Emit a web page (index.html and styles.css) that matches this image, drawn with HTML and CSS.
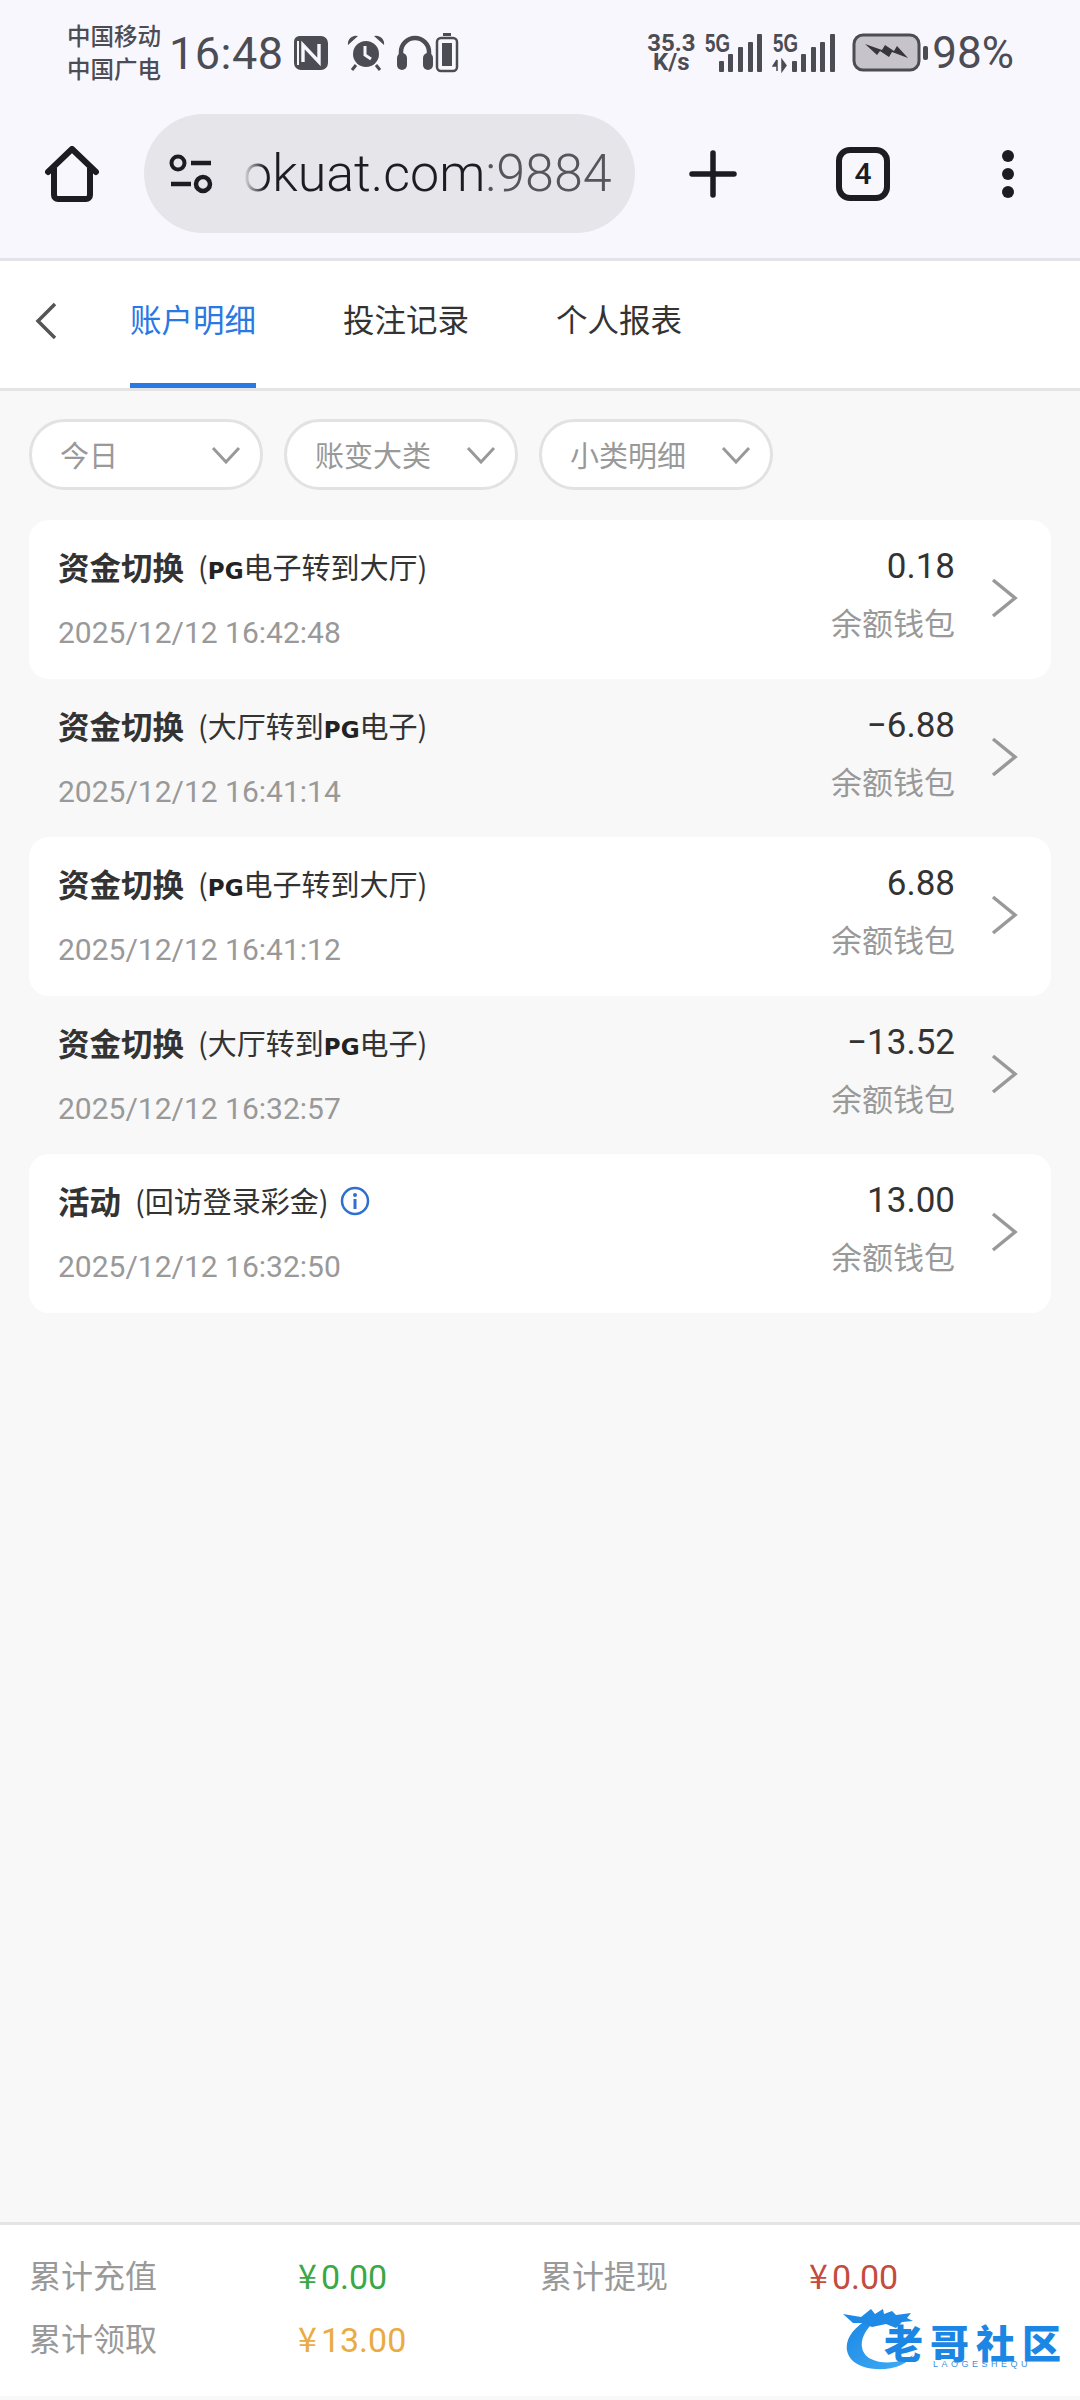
FILE: index.html
```html
<!DOCTYPE html>
<html lang="zh-CN">

<head>
    <meta charset="utf-8">
    <title>账户明细</title>
    <link rel="stylesheet" href="styles.css">
</head>

<body>
    <div class="status-bar">
        <div class="carrier">中国移动<br>中国广电</div>
        <div class="clock">16:48</div>
        <svg class="st-icon" width="36" height="36" viewBox="0 0 36 36">
            <path d="M6 1h22a7 7 0 0 1 7 7v20a7 7 0 0 1-7 7H8a7 7 0 0 1-7-7V7a6 6 0 0 1 5-6z" fill="#4c4c54"/>
            <path d="M10 27V10l16 17V9" fill="none" stroke="#f9f7fe" stroke-width="3.4"/>
            <path d="M5 6v24" stroke="#f9f7fe" stroke-width="2"/>
        </svg>
        <svg class="st-icon alarm" width="38" height="38" viewBox="0 0 38 38">
            <circle cx="19" cy="20" r="13" fill="#4c4c54"/>
            <path d="M1 11a8 8 0 0 1 10-9zM37 11a8 8 0 0 0-10-9z" fill="#4c4c54"/>
            <path d="M9 31l-4 5M29 31l4 5" stroke="#4c4c54" stroke-width="3"/>
            <path d="M18 12v9l6 4" fill="none" stroke="#f9f7fe" stroke-width="3"/>
        </svg>
        <svg class="st-icon phones" width="38" height="36" viewBox="0 0 38 36">
            <path d="M5 22v-5a14 14 0 0 1 28 0v5" fill="none" stroke="#4c4c54" stroke-width="4.500"/>
            <rect x="1" y="18" width="10" height="17" rx="5" fill="#4c4c54"/>
            <rect x="27" y="18" width="10" height="17" rx="5" fill="#4c4c54"/>
        </svg>
        <svg class="st-icon small-batt" width="24" height="40" viewBox="0 0 24 40">
            <rect x="8" y="0" width="8" height="3" fill="#4c4c54"/>
            <rect x="2" y="5" width="20" height="33" rx="4" fill="none" stroke="#4c4c54" stroke-width="2.500"/>
            <rect x="7" y="10" width="10" height="23" fill="#4c4c54"/>
        </svg>

        <div class="status-right">
            <div class="speed">35.3<br>K/s</div>
            <svg class="signal first" width="58" height="48" viewBox="0 -8 58 48">
                <text x="0" y="19" class="net" textLength="25" lengthAdjust="spacingAndGlyphs">5G</text>
                <rect x="14" y="28" width="5" height="11" rx="1" fill="#4c4c54"/>
                <rect x="23" y="21" width="5" height="18" rx="1" fill="#4c4c54"/>
                <rect x="33" y="14" width="5" height="25" rx="1" fill="#4c4c54"/>
                <rect x="43" y="9" width="5" height="30" rx="1" fill="#4c4c54"/>
                <rect x="52" y="1" width="5" height="38" rx="1" fill="#4c4c54"/>
            </svg>
            <svg class="signal" width="64" height="48" viewBox="0 -8 64 48">
                <text x="1" y="19" class="net" textLength="25" lengthAdjust="spacingAndGlyphs">5G</text>
                <path d="M5 27v11M5 27l-4 6h4M10 27v11l4-5.500z" fill="#4c4c54" stroke="#4c4c54" stroke-width="1.500"/>
                <rect x="20" y="28" width="5" height="11" rx="1" fill="#4c4c54"/>
                <rect x="29" y="21" width="5" height="18" rx="1" fill="#4c4c54"/>
                <rect x="39" y="14" width="5" height="25" rx="1" fill="#4c4c54"/>
                <rect x="48" y="9" width="5" height="30" rx="1" fill="#4c4c54"/>
                <rect x="58" y="1" width="5" height="38" rx="1" fill="#4c4c54"/>
            </svg>
            <svg class="battery" width="76" height="40" viewBox="0 0 76 40">
                <rect x="2" y="2" width="65" height="35" rx="9" fill="#c6c4ca" stroke="#4c4c54" stroke-width="3"/>
                <rect x="71" y="13" width="5" height="14" rx="2" fill="#4c4c54"/>
                <path d="M13 11l17 6 3-5 9 6 3-5 11 12-16-6-3 5-9-6-3 4z" fill="#36363c"/>
            </svg>
            <div class="percent">98%</div>
        </div>
    </div>

    <div class="toolbar">
        <svg class="tb-home" width="54" height="56" viewBox="0 0 54 56">
            <path d="M9 22v27a4 4 0 0 0 4 4h28a4 4 0 0 0 4-4V22" fill="none" stroke="#1c1c22" stroke-width="6"/>
            <path d="M3 26L27 3l24 23" fill="none" stroke="#1c1c22" stroke-width="6" stroke-linecap="round" stroke-linejoin="round"/>
        </svg>
        <div class="url-pill">
            <svg width="44" height="40" viewBox="0 0 44 40">
                <circle cx="9" cy="9" r="6.500" fill="none" stroke="#1c1c22" stroke-width="4"/>
                <path d="M22 9h20M2 30h20" stroke="#1c1c22" stroke-width="4.500"/>
                <circle cx="34" cy="30" r="7" fill="none" stroke="#1c1c22" stroke-width="4.500"/>
            </svg>
            <div class="url-text">okuat.com<span class="port">:9884</span></div>
        </div>
        <svg class="tb-plus" width="48" height="48" viewBox="0 0 48 48">
            <path d="M3 24h42M24 3v42" stroke="#1c1c22" stroke-width="5.500" stroke-linecap="round"/>
        </svg>
        <div class="tab-count">4</div>
        <svg class="tb-more" width="16" height="50" viewBox="0 0 16 50">
            <circle cx="8" cy="7" r="6" fill="#1c1c22"/>
            <circle cx="8" cy="25" r="6" fill="#1c1c22"/>
            <circle cx="8" cy="43" r="6" fill="#1c1c22"/>
        </svg>
    </div>

    <div class="tabs">
        <svg class="back" width="24" height="38" viewBox="0 0 24 38">
            <path d="M21 2L4 19l17 17" fill="none" stroke="#555" stroke-width="3.500"/>
        </svg>
        <div class="tab active">账户明细</div>
        <div class="tab">投注记录</div>
        <div class="tab">个人报表</div>
    </div>

    <div class="content">
        <div class="filters">
            <div class="filter"><span>今日</span><svg width="30" height="18" viewBox="0 0 30 18"><path d="M2 2l13 14L28 2" fill="none" stroke="#999" stroke-width="3"/></svg></div>
            <div class="filter"><span>账变大类</span><svg width="30" height="18" viewBox="0 0 30 18"><path d="M2 2l13 14L28 2" fill="none" stroke="#999" stroke-width="3"/></svg></div>
            <div class="filter"><span>小类明细</span><svg width="30" height="18" viewBox="0 0 30 18"><path d="M2 2l13 14L28 2" fill="none" stroke="#999" stroke-width="3"/></svg></div>
        </div>

        <div class="list">
            <div class="row card">
                <div class="row-left">
                    <div class="title"><b>资金切换</b><span class="sub">(<i class="pg">PG</i>电子转到大厅)</span></div>
                    <div class="date">2025/12/12 16:42:48</div>
                </div>
                <div class="row-right">
                    <div class="amount">0.18</div>
                    <div class="wallet">余额钱包</div>
                </div>
                <svg class="arrow" width="28" height="42" viewBox="0 0 28 42"><path d="M3 3l22 18L3 39" fill="none" stroke="#999" stroke-width="3.500"/></svg>
            </div>
            <div class="row">
                <div class="row-left">
                    <div class="title"><b>资金切换</b><span class="sub">(大厅转到<i class="pg">PG</i>电子)</span></div>
                    <div class="date">2025/12/12 16:41:14</div>
                </div>
                <div class="row-right">
                    <div class="amount">−6.88</div>
                    <div class="wallet">余额钱包</div>
                </div>
                <svg class="arrow" width="28" height="42" viewBox="0 0 28 42"><path d="M3 3l22 18L3 39" fill="none" stroke="#999" stroke-width="3.500"/></svg>
            </div>
            <div class="row card">
                <div class="row-left">
                    <div class="title"><b>资金切换</b><span class="sub">(<i class="pg">PG</i>电子转到大厅)</span></div>
                    <div class="date">2025/12/12 16:41:12</div>
                </div>
                <div class="row-right">
                    <div class="amount">6.88</div>
                    <div class="wallet">余额钱包</div>
                </div>
                <svg class="arrow" width="28" height="42" viewBox="0 0 28 42"><path d="M3 3l22 18L3 39" fill="none" stroke="#999" stroke-width="3.500"/></svg>
            </div>
            <div class="row">
                <div class="row-left">
                    <div class="title"><b>资金切换</b><span class="sub">(大厅转到<i class="pg">PG</i>电子)</span></div>
                    <div class="date">2025/12/12 16:32:57</div>
                </div>
                <div class="row-right">
                    <div class="amount">−13.52</div>
                    <div class="wallet">余额钱包</div>
                </div>
                <svg class="arrow" width="28" height="42" viewBox="0 0 28 42"><path d="M3 3l22 18L3 39" fill="none" stroke="#999" stroke-width="3.500"/></svg>
            </div>
            <div class="row card">
                <div class="row-left">
                    <div class="title"><b>活动</b><span class="sub">(回访登录彩金)</span>
                        <svg class="info" width="30" height="30" viewBox="0 0 30 30">
                            <circle cx="15" cy="15" r="13" fill="none" stroke="#2f6fd0" stroke-width="2.500"/>
                            <circle cx="15" cy="9" r="2" fill="#2f6fd0"/>
                            <path d="M15 13v10" stroke="#2f6fd0" stroke-width="3"/>
                        </svg>
                    </div>
                    <div class="date">2025/12/12 16:32:50</div>
                </div>
                <div class="row-right">
                    <div class="amount">13.00</div>
                    <div class="wallet">余额钱包</div>
                </div>
                <svg class="arrow" width="28" height="42" viewBox="0 0 28 42"><path d="M3 3l22 18L3 39" fill="none" stroke="#999" stroke-width="3.500"/></svg>
            </div>
        </div>
    </div>

    <div class="summary">
        <div class="sum-label">累计充值</div>
        <div class="sum-value green">¥<span>0.00</span></div>
        <div class="sum-label">累计提现</div>
        <div class="sum-value red">¥<span>0.00</span></div>
        <div class="sum-label">累计领取</div>
        <div class="sum-value orange">¥<span>13.00</span></div>
    </div>
    <div class="bottom-strip"></div>

    <!-- watermark sits over the footer -->
    <div class="watermark">
        <svg width="222" height="66" viewBox="0 0 222 66">
            <defs>
                <linearGradient id="sw" x1="0" y1="0" x2="1" y2="1">
                    <stop offset="0" stop-color="#1c86e4"/>
                    <stop offset="1" stop-color="#40aef5"/>
                </linearGradient>
            </defs>
            <path d="M26 12C6 22-2 40 8 52c8 10 32 14 50 6 6-3 10-6 12-10-12 8-30 10-42 4C16 46 14 30 32 14z" fill="url(#sw)"/>
            <path d="M0 7l18 3 10-8 4 5 8-5 1 5 8-3 4 4 15-2-4 5 6 3-11 1-6 6-10-4-14 3-10-4-9 0z" fill="#1e8ae6"/>
        </svg>
        <div class="wm-name">老哥社区</div>
        <div class="wm-sub">LAOGESHEQU</div>
    </div>
</body>

</html>
```

FILE: styles.css
```css
* {
    box-sizing: border-box;
}

html,
body {
    margin: 0;
    height: 2400px;
}

body {
    position: relative;
    display: flex;
    flex-direction: column;
    background-color: #f8f8f8;
    font-family: Roboto, "Noto Sans CJK SC", sans-serif;
    overflow: hidden;
}

/* status bar */
.status-bar {
    display: flex;
    align-items: center;
    height: 104px;
    padding: 2px 0 0 67px;
    background-color: #f9f7fe;
    color: #4c4c54;
}

.carrier {
    width: 100px;
    margin-top: -3px;
    font-family: "Noto Sans CJK SC", sans-serif;
    font-size: 23.500px;
    font-weight: 500;
    line-height: 33px;
}

.clock {
    width: 124px;
    margin-left: 2px;
    font-size: 45px;
    letter-spacing: 0.500px;
}

.st-icon {
    margin-right: 14px;
}

.alarm {
    margin-left: 4px;
    margin-right: 11px;
}

.phones {
    margin-right: 0;
}

.small-batt {
    margin-left: 1px;
}

.status-right {
    display: flex;
    align-items: center;
    margin-left: auto;
    padding-right: 66px;
}

.speed {
    width: 52px;
    font-size: 24px;
    font-weight: 700;
    line-height: 19px;
    text-align: center;
}

.signal.first {
    margin-left: 8px;
}

.signal {
    margin-top: -8px;
    margin-left: 9px;
}

.net {
    font-family: "Liberation Sans", sans-serif;
    font-size: 25px;
    font-weight: 700;
    fill: #4c4c54;
}

.battery {
    margin-left: 16px;
}

.percent {
    margin-left: 4px;
    font-size: 44px;
}

/* browser toolbar */
.toolbar {
    display: flex;
    align-items: center;
    height: 157px;
    padding: 10px 0 25px 45px;
    background-color: #f9f7fe;
    border-bottom: 3px solid #e3e3e8;
}

.url-pill {
    display: flex;
    align-items: center;
    width: 491px;
    height: 119px;
    margin-left: 45px;
    padding-left: 25px;
    background-color: #e5e5ea;
    border-radius: 60px;
    overflow: hidden;
}

.url-text {
    margin-left: 30px;
    font-size: 52px;
    font-weight: 300;
    color: #1c1c22;
    white-space: nowrap;
    -webkit-mask-image: linear-gradient(to right, transparent 0, #000 22px);
    mask-image: linear-gradient(to right, transparent 0, #000 22px);
}

.port {
    color: #55555c;
}

.tb-plus {
    margin-left: 54px;
}

.tab-count {
    width: 54px;
    height: 54px;
    margin-left: 99px;
    border: 6px solid #1c1c22;
    border-radius: 14px;
    font-size: 30px;
    font-weight: 500;
    line-height: 42px;
    text-align: center;
    color: #1c1c22;
}

.tb-more {
    margin-left: 110px;
}

/* page tabs */
.tabs {
    display: flex;
    align-items: flex-start;
    height: 130px;
    padding-left: 34px;
    background-color: #fff;
    border-bottom: 3px solid #e4e4e4;
}

.back {
    margin-top: 41px;
}

.tab {
    height: 127px;
    margin-left: 87px;
    padding-top: 35px;
    font-family: "Noto Sans CJK SC", sans-serif;
    font-size: 31.500px;
    line-height: 45px;
    color: #333;
}

.back + .tab {
    margin-left: 72px;
}

.tab.active {
    color: #2a78e4;
    border-bottom: 5px solid #2a78e4;
}

/* filters and list */
.content {
    flex: 1;
    font-family: "Noto Sans CJK SC", sans-serif;
}

.filters {
    display: flex;
    gap: 21px;
    padding: 28px 0 0 29px;
}

.filter {
    display: flex;
    align-items: center;
    justify-content: space-between;
    width: 234px;
    height: 71px;
    padding: 0 19px 0 28px;
    background-color: #fff;
    border: 3px solid #e2e2e2;
    border-radius: 36px;
    font-size: 29px;
    color: #999;
}

.filter span {
    margin-top: -2px;
}

.list {
    margin: 30px 29px 0;
}

.row {
    display: flex;
    align-items: flex-start;
    height: 158.500px;
    padding: 26px 0 0 29px;
    border-radius: 20px;
}

.card {
    background-color: #fff;
}

.row-left {
    flex: 1;
}

.title {
    display: flex;
    align-items: center;
    height: 40px;
    color: #333;
}

.title b {
    font-size: 31.500px;
    font-weight: 700;
}

.sub {
    margin-left: 14px;
    font-size: 29px;
}

.pg {
    font-family: "DejaVu Sans", sans-serif;
    font-size: 23px;
    font-weight: 700;
    font-style: normal;
    color: #222;
}

.info {
    margin-left: 11px;
    margin-top: 2px;
}

.date {
    margin-top: 27px;
    font-family: Roboto, sans-serif;
    font-size: 30px;
    line-height: 40px;
    color: #999;
}

.row-right {
    margin-top: 1px;
    text-align: right;
}

.amount {
    font-family: Roboto, sans-serif;
    font-size: 35px;
    line-height: 40px;
    color: #333;
}

.wallet {
    margin-top: 15px;
    font-size: 31px;
    line-height: 40px;
    color: #999;
}

.arrow {
    margin: 31px 33px 0 35px;
}

/* footer totals */
.summary {
    display: grid;
    grid-template-columns: 269px 242px 269px 1fr;
    grid-template-rows: 63px 63px;
    align-content: start;
    height: 174px;
    padding: 18px 0 0 29px;
    background-color: #fff;
    border-top: 3px solid #e4e4e4;
    font-family: "Noto Sans CJK SC", sans-serif;
    font-size: 32px;
    line-height: 63px;
    color: #999;
}

.sum-value {
    font-size: 34px;
}

.sum-value span {
    margin-left: 4px;
    font-family: Roboto, sans-serif;
    font-size: 34px;
}

.green {
    color: #39a845;
}

.red {
    color: #c44c3e;
}

.orange {
    color: #e9ab43;
}

.bottom-strip {
    height: 4px;
    background-color: #f8f8f8;
}

.watermark {
    position: absolute;
    left: 843px;
    top: 2307px;
    width: 222px;
    height: 66px;
}

.wm-name {
    position: absolute;
    left: 41px;
    top: 19px;
    width: 184px;
    font-family: "Noto Sans CJK SC", sans-serif;
    font-size: 39px;
    font-weight: 900;
    line-height: 31px;
    letter-spacing: 7px;
    white-space: nowrap;
    color: #1c86e4;
}

.wm-sub {
    position: absolute;
    left: 90px;
    top: 52px;
    font-family: "Liberation Sans", sans-serif;
    font-size: 9px;
    line-height: 10px;
    letter-spacing: 3.500px;
    color: #3f8fdc;
}
```
